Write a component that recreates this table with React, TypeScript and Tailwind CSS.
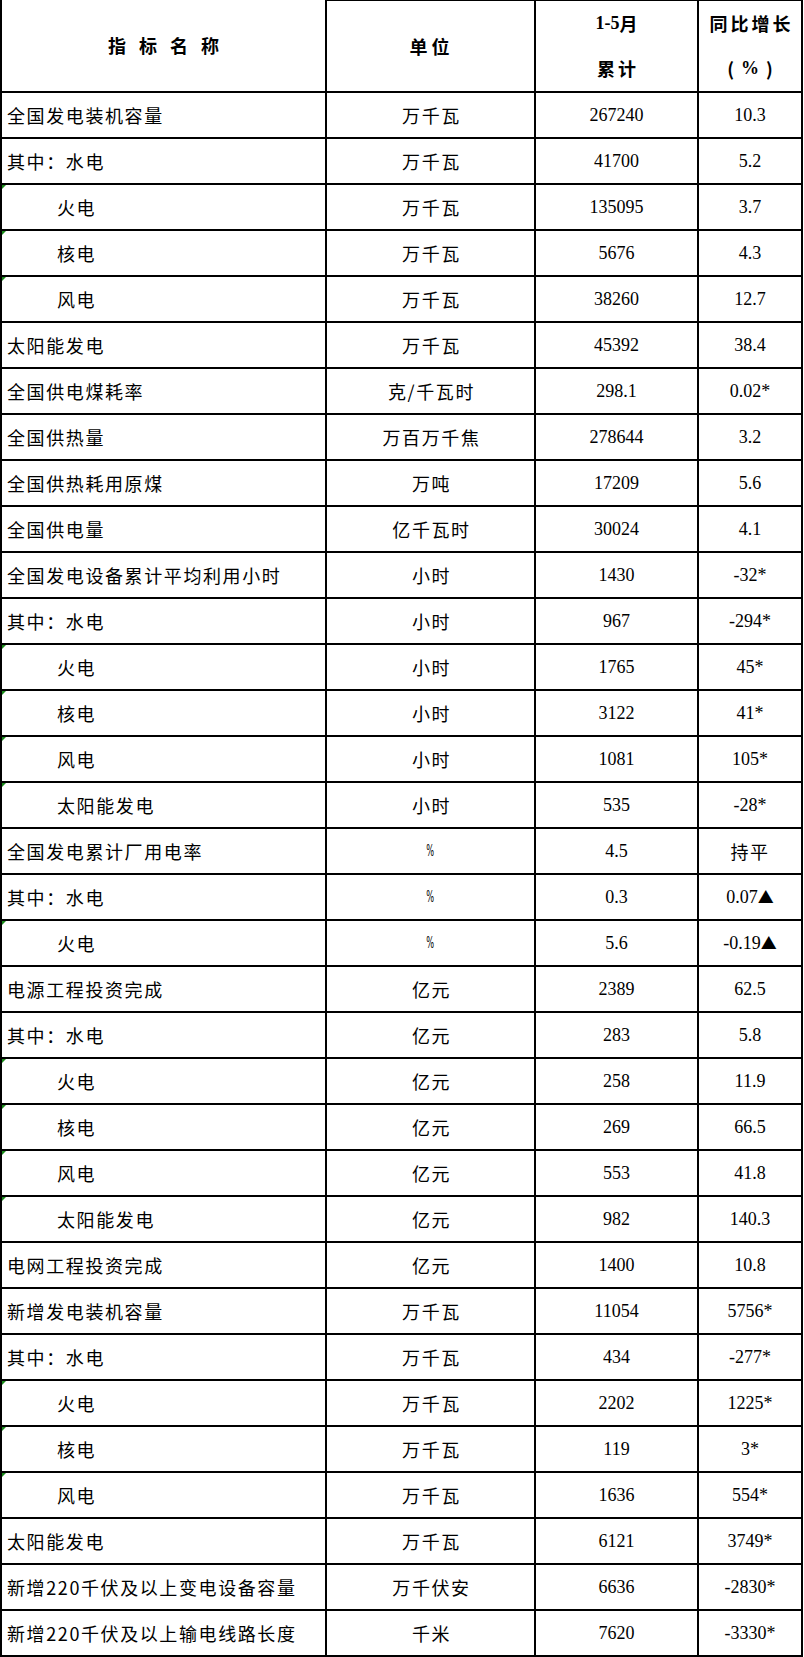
import React from 'react'

// ── Data ──────────────────────────────────────────────────────────────────────

type Row = {
  name: string
  sub?: boolean
  unit: string
  value: string
  change: string
}

const rows: Row[] = [
  { name: '全国发电装机容量', unit: '万千瓦', value: '267240', change: '10.3' },
  { name: '其中：水电', unit: '万千瓦', value: '41700', change: '5.2' },
  { name: '火电', sub: true, unit: '万千瓦', value: '135095', change: '3.7' },
  { name: '核电', sub: true, unit: '万千瓦', value: '5676', change: '4.3' },
  { name: '风电', sub: true, unit: '万千瓦', value: '38260', change: '12.7' },
  { name: '太阳能发电', unit: '万千瓦', value: '45392', change: '38.4' },
  { name: '全国供电煤耗率', unit: '克/千瓦时', value: '298.1', change: '0.02*' },
  { name: '全国供热量', unit: '万百万千焦', value: '278644', change: '3.2' },
  { name: '全国供热耗用原煤', unit: '万吨', value: '17209', change: '5.6' },
  { name: '全国供电量', unit: '亿千瓦时', value: '30024', change: '4.1' },
  { name: '全国发电设备累计平均利用小时', unit: '小时', value: '1430', change: '-32*' },
  { name: '其中：水电', unit: '小时', value: '967', change: '-294*' },
  { name: '火电', sub: true, unit: '小时', value: '1765', change: '45*' },
  { name: '核电', sub: true, unit: '小时', value: '3122', change: '41*' },
  { name: '风电', sub: true, unit: '小时', value: '1081', change: '105*' },
  { name: '太阳能发电', sub: true, unit: '小时', value: '535', change: '-28*' },
  { name: '全国发电累计厂用电率', unit: '%', value: '4.5', change: '持平' },
  { name: '其中：水电', unit: '%', value: '0.3', change: '0.07▲' },
  { name: '火电', sub: true, unit: '%', value: '5.6', change: '-0.19▲' },
  { name: '电源工程投资完成', unit: '亿元', value: '2389', change: '62.5' },
  { name: '其中：水电', unit: '亿元', value: '283', change: '5.8' },
  { name: '火电', sub: true, unit: '亿元', value: '258', change: '11.9' },
  { name: '核电', sub: true, unit: '亿元', value: '269', change: '66.5' },
  { name: '风电', sub: true, unit: '亿元', value: '553', change: '41.8' },
  { name: '太阳能发电', sub: true, unit: '亿元', value: '982', change: '140.3' },
  { name: '电网工程投资完成', unit: '亿元', value: '1400', change: '10.8' },
  { name: '新增发电装机容量', unit: '万千瓦', value: '11054', change: '5756*' },
  { name: '其中：水电', unit: '万千瓦', value: '434', change: '-277*' },
  { name: '火电', sub: true, unit: '万千瓦', value: '2202', change: '1225*' },
  { name: '核电', sub: true, unit: '万千瓦', value: '119', change: '3*' },
  { name: '风电', sub: true, unit: '万千瓦', value: '1636', change: '554*' },
  { name: '太阳能发电', unit: '万千瓦', value: '6121', change: '3749*' },
  { name: '新增220千伏及以上变电设备容量', unit: '万千伏安', value: '6636', change: '-2830*' },
  { name: '新增220千伏及以上输电线路长度', unit: '千米', value: '7620', change: '-3330*' },
]

const sans = "font-['Noto_Sans_CJK_SC',sans-serif]"
const serif = "font-['Liberation_Serif','Noto_Sans_CJK_SC',serif]"
const cell = 'flex items-center border-r-2 border-b-2 border-black'

// ── Cells ─────────────────────────────────────────────────────────────────────

function Change({ text }: { text: string }) {
  if (text === '持平') {
    return <span className={`${sans} text-[18px] tracking-[1.5px]`}>持平</span>
  }
  if (text.endsWith('▲')) {
    return (
      <span className={serif}>
        {text.slice(0, -1)}
        <span className={`${sans} text-[16px]`}>▲</span>
      </span>
    )
  }
  return <span className={serif}>{text}</span>
}

function DataRow({ row }: { row: Row }) {
  return (
    <>
      <div className={`${cell} relative h-[46px] ${row.sub ? 'pl-[55px]' : 'pl-[5px]'}`}>
        {row.sub && (
          <span className="absolute left-0 top-0 h-0 w-0 border-t-[4px] border-r-[4px] border-t-[#1a8a1a] border-r-transparent" />
        )}
        <span className={`${sans} text-[18px] tracking-[1.6px] whitespace-nowrap`}>{row.name}</span>
      </div>
      <div className={`${cell} h-[46px] justify-center`}>
        {row.unit === '%' ? (
          <span className="font-['DejaVu_Sans',sans-serif] text-[15px] leading-none scale-x-[0.55] inline-block">%</span>
        ) : (
          <span className={`${sans} text-[18px] tracking-[1.6px] pl-[2px]`}>{row.unit}</span>
        )}
      </div>
      <div className={`${cell} h-[46px] justify-center ${serif} text-[18px]`}>{row.value}</div>
      <div className={`${cell} h-[46px] justify-center text-[18px]`}>
        <Change text={row.change} />
      </div>
    </>
  )
}

// ── Page ──────────────────────────────────────────────────────────────────────

export default function App() {
  const head = `${sans} text-[18px] font-bold`
  return (
    <div className="w-[804px] bg-white text-black">
      <div className="grid w-[803px] grid-cols-[325px_209px_163px_104px] border-l-2 border-black">
        {/* header */}
        <div className={`${cell} h-[93px] justify-center ${head} gap-[13px]`}>
          <span>指</span>
          <span>标</span>
          <span>名</span>
          <span>称</span>
        </div>
        <div className={`${cell} h-[93px] border-t border-black justify-center ${head} tracking-[4px] pl-[2px]`}>
          单位
        </div>
        <div className={`${cell} h-[93px] border-t border-black flex-col justify-start ${head}`}>
          <div className="flex h-[46px] items-center">
            <span className="font-['Liberation_Serif',serif]">1-5</span>
            <span>月</span>
          </div>
          <div className="flex h-[46px] items-center tracking-[3px] pl-[3px]">累计</div>
        </div>
        <div className={`${cell} h-[93px] border-t border-black flex-col justify-start ${head}`}>
          <div className="flex h-[46px] items-center tracking-[3px] pl-[3px]">同比增长</div>
          <div className="flex h-[46px] items-center gap-[7px]">
            <span>(</span>
            <span className="font-['Liberation_Serif',serif]">%</span>
            <span>)</span>
          </div>
        </div>

        {rows.map((r, i) => (
          <DataRow key={i} row={r} />
        ))}
      </div>
    </div>
  )
}
